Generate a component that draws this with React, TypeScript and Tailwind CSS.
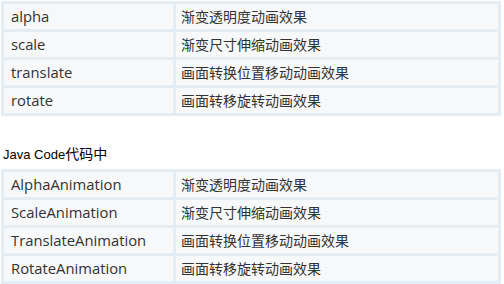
const xmlRows = [
  ['alpha', '渐变透明度动画效果'],
  ['scale', '渐变尺寸伸缩动画效果'],
  ['translate', '画面转换位置移动动画效果'],
  ['rotate', '画面转移旋转动画效果'],
]

const javaRows = [
  ['AlphaAnimation', '渐变透明度动画效果'],
  ['ScaleAnimation', '渐变尺寸伸缩动画效果'],
  ['TranslateAnimation', '画面转换位置移动动画效果'],
  ['RotateAnimation', '画面转移旋转动画效果'],
]

function AnimTable({ rows }: { rows: string[][] }) {
  return (
    <table className="ml-px w-[500px] border-separate border-spacing-[3px] bg-[#e4ecf4] text-[#333]">
      <tbody>
        {rows.map(([name, desc]) => (
          <tr key={name}>
            <td className="h-[25px] w-[169px] bg-[#f7f8fa] p-0 px-[7px] text-[14.8px] leading-none">{name}</td>
            <td className="h-[25px] bg-[#f7f8fa] p-0 px-[5px] text-[14px] leading-none">{desc}</td>
          </tr>
        ))}
      </tbody>
    </table>
  )
}

export default function App() {
  return (
    <div
      className="h-[284px] w-[504px] overflow-hidden bg-white pt-px"
      style={{ fontFamily: '"Open Sans", "Noto Sans CJK SC", sans-serif' }}
    >
      <AnimTable rows={xmlRows} />
      <p
        className="mt-[30px] mb-[6px] pl-[3px] text-[13px] leading-[16px] text-black"
        style={{ fontFamily: '"Liberation Sans", "Noto Sans CJK SC", sans-serif' }}
      >
        Java Code<span className="text-[14px]">代码中</span>
      </p>
      <AnimTable rows={javaRows} />
    </div>
  )
}
